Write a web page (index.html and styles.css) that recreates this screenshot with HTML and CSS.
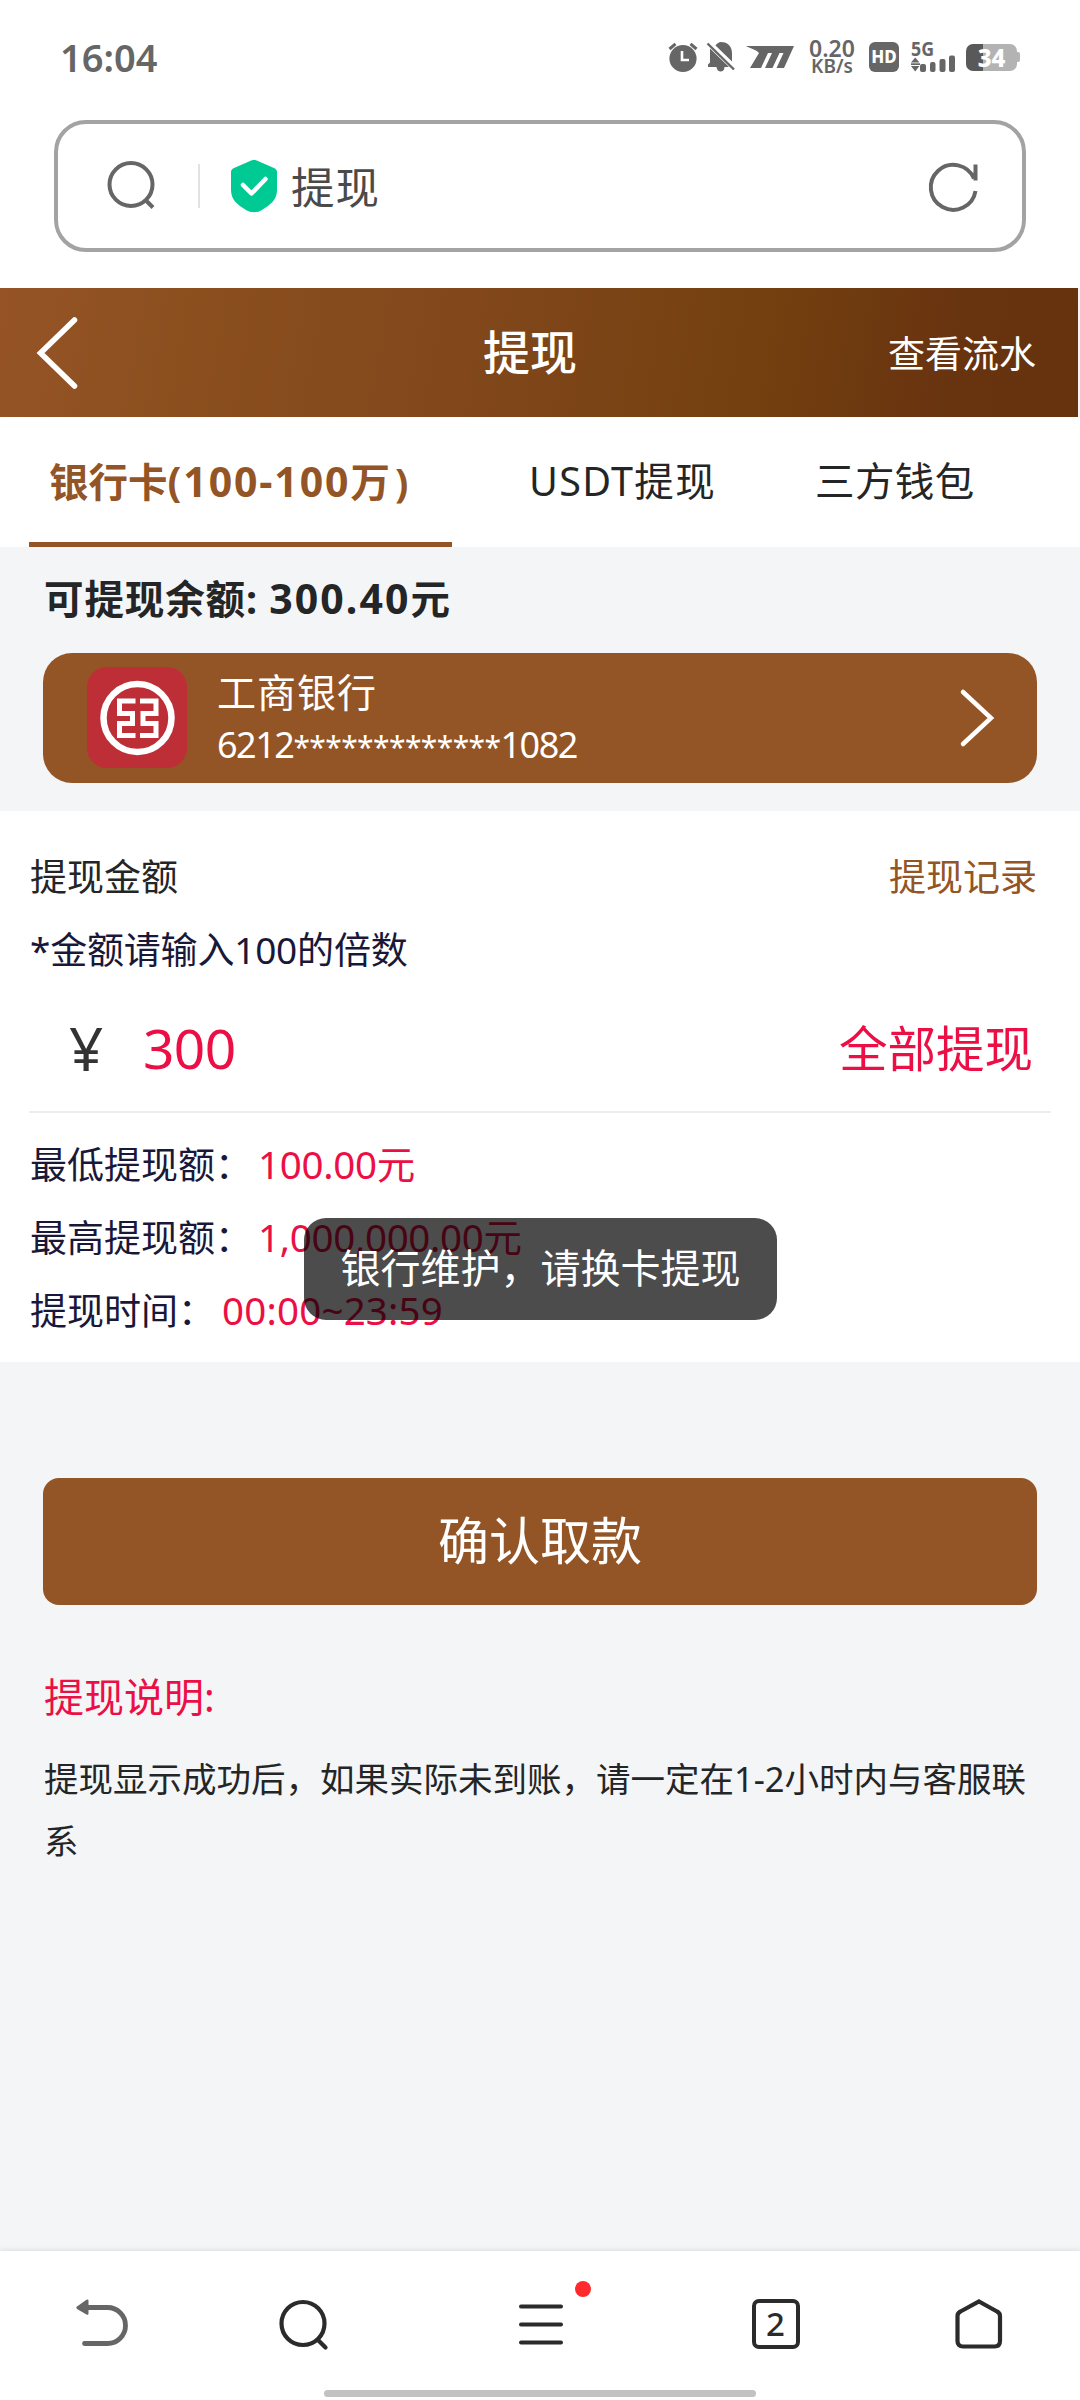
FILE: index.html
```html
<!DOCTYPE html>
<html lang="zh-CN">
<head>
<meta charset="utf-8">
<title>提现</title>
<link rel="stylesheet" href="styles.css">
</head>
<body>
<div class="screen">
  <div class="status">
    <span class="clock">16:04</span>
    <div class="status-icons">
      <svg class="alarm" width="30" height="30" viewBox="0 0 30 30"><circle cx="15" cy="16.5" r="13.6" fill="#666"/><path d="M1.5 7 7.5 1.8M28.5 7 22.5 1.8" stroke="#666" stroke-width="3"/><path d="M14 9v9h7" fill="none" stroke="#fff" stroke-width="2.6"/></svg>
      <svg class="bell" width="28" height="30" viewBox="0 0 28 30"><path fill="#666" d="M14 0C19 0 25 3 25 11v8.500L8.500 3.500C10 1.500 12 0 14 0ZM3 6.500 22 25h-4.500c0 6-7.500 6-8 0H1v-2.500l2-2Z"/><path d="M.5 1.500 27 27.500" stroke="#666" stroke-width="2.400"/></svg>
      <svg class="moto" width="48" height="22" viewBox="0 0 48 22"><path fill="#666" d="M0 0h48L38 22h-7.500l7-15h-4l-7 15H19l7-15h-4l-7 15H4l9-15C10 3.500 5 2.500 0 0Z"/></svg>
      <div class="speed"><span>0.20</span><span class="unit">KB/s</span></div>
      <span class="hd">HD</span>
      <svg class="signal" width="44" height="30" viewBox="0 0 44 30"><g fill="#666"><text x="0" y="14" class="fiveg" textLength="23" lengthAdjust="spacingAndGlyphs">5G</text><path d="M0 20.500 4.200 15.500 8.500 20.500ZM0 24h8.500L4.200 29.500Z"/><rect x="0" y="21.300" width="9" height="1.700"/><rect x="9" y="22" width="6" height="8" rx="2"/><rect x="19" y="20" width="5.500" height="10" rx="2"/><rect x="28.500" y="17" width="6" height="13" rx="2"/><rect x="38" y="13.500" width="6" height="16.500" rx="2"/></g></svg>
      <div class="battery"><span>34</span></div>
    </div>
  </div>

  <div class="address">
    <svg class="find" width="50" height="50" viewBox="0 0 50 50" fill="none" stroke="#666" stroke-width="4"><circle cx="24" cy="24.500" r="21.500"/><path d="m38.500 40 7.500 7.500"/></svg>
    <i class="bar"></i>
    <svg class="shield" width="46" height="52" viewBox="0 0 46 52"><path fill="#00ca93" d="M23 0c2 0 3 .5 5 1.500L43 8c2 1 3 2 3 4v18c0 10-7 15-15 20-5 3-11 3-16 0C7 45 0 40 0 30V12c0-2 1-3 3-4l15-6.500C20 .5 21 0 23 0Z"/><path d="m12 25 8.500 8.500L34.500 19" fill="none" stroke="#fff" stroke-width="4.500" stroke-linecap="round" stroke-linejoin="round"/></svg>
    <span class="address-title">提现</span>
    <svg class="reload" width="50" height="50" viewBox="0 0 50 50" fill="none" stroke="#666" stroke-width="4"><path d="M47.500 30A22.500 22.500 0 1 1 46 17.500M47.500 3.500v16"/></svg>
  </div>

  <div class="header">
    <svg width="44" height="76" viewBox="0 0 44 76"><path d="M38.500 5 4.500 38l34 33" fill="none" stroke="#fff" stroke-width="5.500" stroke-linecap="round"/></svg>
    <span class="header-title">提现</span>
    <span class="header-link">查看流水</span>
  </div>

  <div class="tabs">
    <div class="tab active">银行卡<span class="range">(100-100</span>万<span class="close">)</span></div>
    <div class="tab usdt">USDT提现</div>
    <div class="tab wallet">三方钱包</div>
  </div>

  <div class="account">
    <div class="balance">可提现余额: <span class="sum">300.40</span>元</div>
    <div class="card">
      <svg width="100" height="101" viewBox="0 0 100 101"><rect width="100" height="101" rx="20" fill="#bd2e37"/><circle cx="50.500" cy="51" r="34" fill="none" stroke="#fff" stroke-width="6.500"/><path d="M48.500 34H32.500V46.500H45.500V56.500H32.500V68.500H48.500M53 34H69V46.500H56V56.500H69V68.500H53" fill="none" stroke="#fff" stroke-width="5"/></svg>
      <div class="bank"><span class="bank-name">工商银行</span><span class="bank-number">6212<span class="mask">*************</span>1082</span></div>
      <svg class="go" width="36" height="64" viewBox="0 0 36 64"><path d="M4 6 32 32 4 58" fill="none" stroke="#fff" stroke-width="4.500" stroke-linecap="round"/></svg>
    </div>
  </div>

  <div class="form">
    <div class="row"><span class="dark">提现金额</span><span class="record">提现记录</span></div>
    <div class="row hint">*金额请输入100的倍数</div>
    <div class="amount"><span class="yen">¥</span><span class="value">300</span><span class="all">全部提现</span></div>
    <div class="limits">
      <div class="row"><span>最低提现额：</span><span class="red">100.00元</span></div>
      <div class="row"><span>最高提现额：</span><span class="red">1,000,000.00元</span></div>
      <div class="row"><span>提现时间：</span><span class="red time">00:00~23:59</span></div>
    </div>
    <div class="toast">银行维护，请换卡提现</div>
  </div>

  <div class="actions">
    <div class="confirm">确认取款</div>
    <div class="notice-title">提现说明:</div>
    <div class="notice">提现显示成功后，如果实际未到账，请一定在1-2小时内与客服联系</div>
  </div>

  <div class="nav">
    <div class="nav-items">
      <svg class="undo" width="54" height="50" viewBox="0 0 54 50"><path d="M12 8.500H32.500a18 18 0 0 1 0 36H9.500" fill="none" stroke="#666" stroke-width="4.800" stroke-linecap="round"/><path d="M2 7.500 11.500.8q2-1 2 1V14.500q0 2-2 1L2 10q-1.500-1.300 0-2.500Z" fill="#666"/></svg>
      <svg width="50" height="50" viewBox="0 0 50 50" fill="none" stroke="#2b2b2b" stroke-width="4.200" stroke-linecap="round"><circle cx="24" cy="24.500" r="21.500"/><path d="m39 41 7.500 7.500"/></svg>
      <div class="menu">
        <svg width="44" height="50" viewBox="0 0 44 50" stroke="#2b2b2b" stroke-width="4" stroke-linecap="round"><path d="M2 7.500H42M2 25.500H42M2 43.500H42"/></svg>
        <i class="dot"></i>
      </div>
      <div class="windows">2</div>
      <svg width="48" height="50" viewBox="0 0 48 50"><path d="M24 2.500 42 12.500Q45 14 45 17V42q0 5.500-5.500 5.500H8Q2.500 47.500 2.500 42V17q0-3 3-4.500Z" fill="none" stroke="#2b2b2b" stroke-width="4.200"/></svg>
    </div>
    <i class="home-bar"></i>
  </div>
</div>
</body>
</html>
```
FILE: styles.css
```css
* { box-sizing: border-box; }
body { margin: 0; }
svg { display: block; flex: none; overflow: visible; }
.screen {
  width: 1080px; height: 2400px; display: flex; flex-direction: column;
  overflow: hidden; background: #f3f5f7; color: #242526; white-space: nowrap;
  font-family: "Noto Sans", "Noto Sans CJK SC", sans-serif;
}

.status { height: 120px; background: #fff; padding: 0 60px 6px 60px; display: flex; align-items: center; justify-content: space-between; }
.clock { font-size: 38px; font-weight: 600; color: #666; line-height: 50px; }
.status-icons { display: flex; align-items: center; }
.bell { margin-left: 9px; }
.moto { margin-left: 11px; }
.speed { margin-left: 14px; width: 48px; display: flex; flex-direction: column; align-items: center; font-size: 23px; line-height: 18px; font-weight: 600; color: #666; }
.unit { font-size: 19px; }
.hd { margin-left: 13px; width: 30px; height: 30px; border-radius: 6px; background: #666; color: #fff; font-size: 17px; font-weight: 800; line-height: 30px; text-align: center; }
.signal { margin-left: 12px; }
.fiveg { font-size: 19px; font-weight: 700; }
.battery { margin-left: 11px; width: 51px; height: 27px; margin-right: 3px; border-radius: 7px; position: relative; background: linear-gradient(to right, #595959 17px, #b3b3b3 17px); color: #fff; font-size: 24px; font-weight: 800; line-height: 27px; text-align: center; }
.battery::after { content: ""; position: absolute; left: 51px; top: 8px; width: 3px; height: 10px; border-radius: 0 2px 2px 0; background: #b3b3b3; }

.address { height: 132px; border: 4px solid #a3a3a3; border-radius: 32px; margin: 0 54px; padding: 0 44px 0 49px; display: flex; align-items: center; background: #fff; box-shadow: 0 0 0 200px #fff; clip-path: inset(-5px -60px -36px -60px); flex: none; }
.find { margin-bottom: 2px; }
.bar { width: 2px; height: 44px; margin-left: 41px; background: #e2e2e2; }
.shield { margin-left: 31px; }
.address-title { margin-left: 14px; font-size: 43.500px; letter-spacing: 1px; color: #4a4a4a; line-height: 60px; padding-top: 1px; }
.reload { margin-left: auto; }

.header { margin-top: 36px; height: 129px; width: 1078px; background: linear-gradient(100deg, #965426 0%, #8b4f1e 18%, #82481c 42%, #74400f 70%, #68330f 88%, #67330f 100%); color: #fff; padding: 0 42px 0 36px; display: grid; grid-template-columns: 1fr auto 1fr; align-items: center; flex: none; }
.header-title { font-size: 47px; font-weight: 500; padding: 0 12px 2px 0; line-height: 60px; }
.header-link { justify-self: end; font-size: 37px; padding-bottom: 2px; }

.tabs { height: 130px; background: #fff; padding-left: 29px; display: flex; font-size: 39.500px; line-height: 129px; flex: none; box-shadow: 2px 0 #fff; }
.tab.active { width: 423px; border-bottom: 5px solid #945526; color: #945526; font-weight: 700; padding-left: 20px; }
.range { font-size: 41px; letter-spacing: 1.900px; }
.close { margin-left: 5px; }
.usdt { margin-left: 77px; width: 286px; letter-spacing: 1.300px; }
.wallet { letter-spacing: .4px; }

.account { height: 264px; padding: 22px 43px 0; flex: none; }
.balance { height: 60px; font-size: 39.500px; font-weight: 700; line-height: 59px; margin-bottom: 24px; padding-left: 1px; letter-spacing: .9px; }
.sum { font-size: 41px; letter-spacing: 2.100px; }
.card { height: 129.500px; border-radius: 29px; background: #945526; color: #fff; padding: 0 42px 0 44px; display: flex; align-items: center; }
.bank { margin-left: 30px; display: flex; flex-direction: column; line-height: 53px; }
.bank-name { height: 53px; font-size: 39px; letter-spacing: 1px; }
.bank-number { height: 53px; font-size: 36px; letter-spacing: -1.500px; }
.mask { font-size: 30px; letter-spacing: -.6px; line-height: 1; }
.go { margin-left: auto; }

.form { position: relative; height: 551px; background: #fff; padding: 29px 29px 0; color: #1a1838; flex: none; }
.row { height: 73px; line-height: 73px; display: flex; font-size: 37px; padding-left: 1px; }
.hint { letter-spacing: -.2px; }
.dark { color: #242526; }
.record { margin-left: auto; padding-right: 14px; color: #945526; }
.amount { height: 127px; border-bottom: 2px solid #ededed; display: flex; align-items: center; line-height: 70px; padding-bottom: 2px; color: #ec0f45; }
.yen { width: 114px; padding-left: 40px; font-size: 60px; color: #333; }
.value { font-size: 55px; letter-spacing: -.6px; }
.all { margin-left: auto; padding-right: 18px; font-size: 48.500px; }
.limits { padding-top: 15px; }
.red { margin-left: 6px; font-size: 38.500px; letter-spacing: -.3px; color: #ec0f45; }
.time { margin-left: 7px; letter-spacing: .2px; }
.toast { position: absolute; left: 304px; top: 407px; width: 473px; height: 102px; border-radius: 22px; background: rgba(0, 0, 0, .7); color: #fff; font-size: 40px; line-height: 100px; text-align: center; }

.actions { flex: 1; padding: 116px 43px 0; }
.confirm { height: 127px; border-radius: 16px; background: #945526; color: #fff; font-size: 51px; line-height: 125px; text-align: center; }
.notice-title { margin-top: 61px; padding-left: 1px; font-size: 40px; line-height: 62px; color: #ec0f45; }
.notice { margin-top: 20px; padding-left: 1px; font-size: 34.500px; line-height: 62px; white-space: normal; }

.nav { height: 149px; background: #fff; box-shadow: 0 -1px 5px rgba(0, 0, 0, .1); display: flex; flex-direction: column; align-items: center; flex: none; }
.nav-items { width: 100%; padding: 48px 77px 0 75px; display: flex; justify-content: space-between; height: 139px; }
.undo { margin-right: -4px; }
.menu { position: relative; margin-left: 37px; margin-right: 37px; }
.dot { position: absolute; left: 56px; top: -18px; width: 16px; height: 16px; border-radius: 50%; background: #ff2a2d; }
.windows { width: 48px; height: 50px; margin: 0 2px 0 -2px; border: 4px solid #2b2b2b; border-radius: 7px; font-size: 33px; font-weight: 500; line-height: 42px; text-align: center; color: #2b2b2b; }
.home-bar { width: 432px; height: 7px; border-radius: 4px; background: #c2c2c2; }
```
